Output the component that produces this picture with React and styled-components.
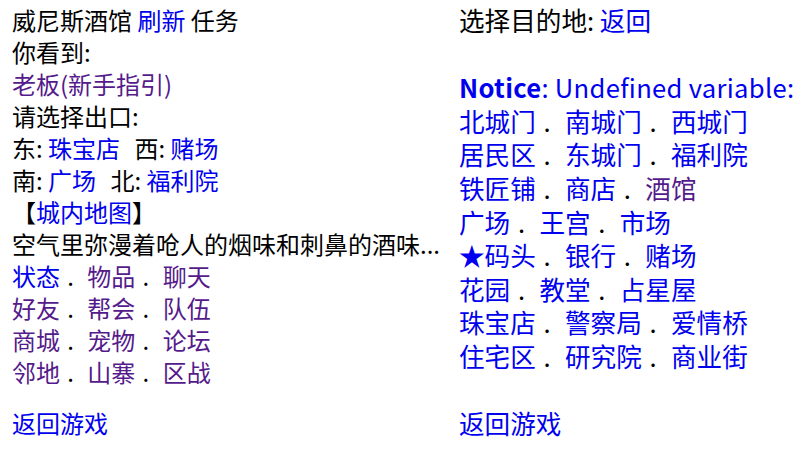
import React from "react";
import styled, { createGlobalStyle } from "styled-components";

const GlobalStyle = createGlobalStyle`
  html, body {
    margin: 0;
    padding: 0;
    background: #ffffff;
  }
  body {
    font-family: "Noto Sans CJK SC", "Noto Sans", sans-serif;
    color: #000;
  }
`;

const Page = styled.div`
  display: flex;
  flex-direction: row;
  width: 800px;
  height: 463px;
  overflow: hidden;
`;

const Pane = styled.div`
  box-sizing: border-box;
  display: flex;
  flex-direction: column;
  white-space: nowrap;
  overflow: hidden;
  padding-left: 12px;
  padding-top: ${(p) => p.$top}px;
  width: ${(p) => p.$width};
  font-size: ${(p) => p.$size}px;
  line-height: ${(p) => p.$lh}px;
`;

const Line = styled.div`
  min-height: 1em;
  margin-top: ${(p) => p.$gap || 0}px;
  letter-spacing: ${(p) => p.$spacing || 0}px;
`;

const Blank = styled.div`
  height: ${(p) => p.$h}px;
`;

const Link = styled.a`
  color: ${(p) => (p.$visited ? "#551a8b" : "#0000ee")};
  text-decoration: none;
  cursor: pointer;
`;

const Strong = styled.b`
  font-weight: 700;
`;

const Sep = styled.span`
  display: inline-block;
  box-sizing: border-box;
  width: 1.14em;
  padding-left: 0.3em;
`;

const Pad = styled.span`
  display: inline-block;
  width: 0.6em;
`;

const leftMenu = [
  [["状态", false], ["物品", true], ["聊天", true]],
  [["好友", true], ["帮会", true], ["队伍", true]],
  [["商城", true], ["宠物", true], ["论坛", true]],
  [["邻地", true], ["山寨", true], ["区战", true]],
];

const rightMenu = [
  [["北城门"], ["南城门"], ["西城门"]],
  [["居民区"], ["东城门"], ["福利院"]],
  [["铁匠铺"], ["商店"], ["酒馆", true]],
  [["广场"], ["王宫"], ["市场"]],
  [["★码头"], ["银行"], ["赌场"]],
  [["花园"], ["教堂"], ["占星屋"]],
  [["珠宝店"], ["警察局"], ["爱情桥"]],
  [["住宅区"], ["研究院"], ["商业街"]],
];

function MenuRow({ items }) {
  return (
    <Line>
      {items.map(([label, visited], i) => (
        <React.Fragment key={label}>
          {i > 0 && <Sep>.</Sep>}
          <Link $visited={visited}>{label}</Link>
        </React.Fragment>
      ))}
    </Line>
  );
}

export default function App() {
  return (
    <>
      <GlobalStyle />
      <Page>
        <Pane $width="447px" $size={24} $lh={32} $top={4}>
          <Line>
            威尼斯酒馆 <Link>刷新</Link> 任务
          </Line>
          <Line>你看到:</Line>
          <Line>
            <Link $visited>老板(新手指引)</Link>
          </Line>
          <Line>请选择出口:</Line>
          <Line>
            东: <Link>珠宝店</Link>
            <Pad />
            西: <Link>赌场</Link>
          </Line>
          <Line>
            南: <Link>广场</Link>
            <Pad />
            北: <Link>福利院</Link>
          </Line>
          <Line>
            【<Link>城内地图</Link>】
          </Line>
          <Line>空气里弥漫着呛人的烟味和刺鼻的酒味...</Line>
          {leftMenu.map((row, i) => (
            <MenuRow key={i} items={row} />
          ))}
          <Line $gap={19}>
            <Link>返回游戏</Link>
          </Line>
        </Pane>
        <Pane $width="353px" $size={25.6} $lh={33.6} $top={3}>
          <Line>
            选择目的地: <Link>返回</Link>
          </Line>
          <Blank $h={33.6} />
          <Line $spacing={0.3}>
            <Link>
              <Strong>Notice</Strong>: Undefined variable:
            </Link>
          </Line>
          {rightMenu.map((row, i) => (
            <MenuRow key={i} items={row} />
          ))}
          <Blank $h={33.6} />
          <Line>
            <Link>返回游戏</Link>
          </Line>
        </Pane>
      </Page>
    </>
  );
}
